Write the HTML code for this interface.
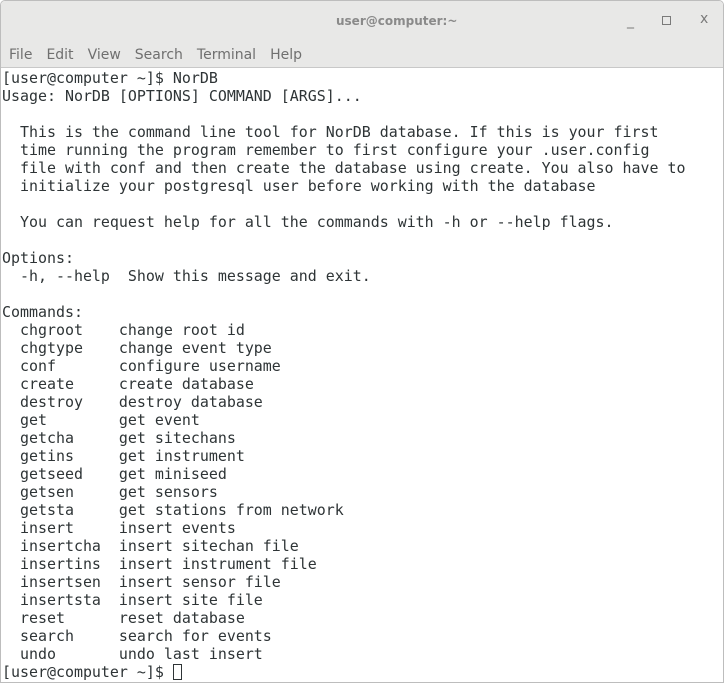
<html><head><style>
body{margin:0;width:724px;height:683px;background:#fff;overflow:hidden;font-family:"DejaVu Sans",sans-serif}
.win{position:absolute;left:0;top:0;width:722px;height:681px;border:1px solid #bdbdbd;border-radius:5px 5px 0 0;overflow:hidden}
.hdr{height:66px;background:#e8e8e7;border-bottom:1px solid #c8c8c8;position:relative}
.title{position:absolute;top:13px;left:335px;font-size:12px;font-weight:bold;color:#8a8a8a}
.menu{position:absolute;top:46px;left:8px;font-size:14px;color:#6f6f6f;word-spacing:0}
.menu span{margin-right:14px}
.ctl{position:absolute;top:10px;font-size:14px;color:#7a7a7a}
pre{margin:0;position:absolute;left:1px;top:68px;font-family:"DejaVu Sans Mono",monospace;font-size:14.95px;line-height:18px;color:#2e3436}
.cur{display:inline-block;width:9px;height:16px;border:1px solid #2e3436;vertical-align:-3px;box-sizing:border-box}
</style></head><body><div class="win">
<div class="hdr"><div class="title">user@computer:~</div>
<div class="ctl" style="left:626px;top:12px">_</div>
<div class="ctl" style="left:661px;top:11px"><div style="width:7px;height:7px;border:1px solid #7a7a7a;margin-top:4px"></div></div>
<div class="ctl" style="left:699px">x</div>
<div class="menu"><span>File</span><span>Edit</span><span>View</span><span>Search</span><span>Terminal</span><span>Help</span></div></div>
<pre>[user@computer ~]$ NorDB
Usage: NorDB [OPTIONS] COMMAND [ARGS]...

  This is the command line tool for NorDB database. If this is your first
  time running the program remember to first configure your .user.config
  file with conf and then create the database using create. You also have to
  initialize your postgresql user before working with the database

  You can request help for all the commands with -h or --help flags.

Options:
  -h, --help  Show this message and exit.

Commands:
  chgroot    change root id
  chgtype    change event type
  conf       configure username
  create     create database
  destroy    destroy database
  get        get event
  getcha     get sitechans
  getins     get instrument
  getseed    get miniseed
  getsen     get sensors
  getsta     get stations from network
  insert     insert events
  insertcha  insert sitechan file
  insertins  insert instrument file
  insertsen  insert sensor file
  insertsta  insert site file
  reset      reset database
  search     search for events
  undo       undo last insert
[user@computer ~]$ <span class="cur"></span></pre>
</div></body></html>
